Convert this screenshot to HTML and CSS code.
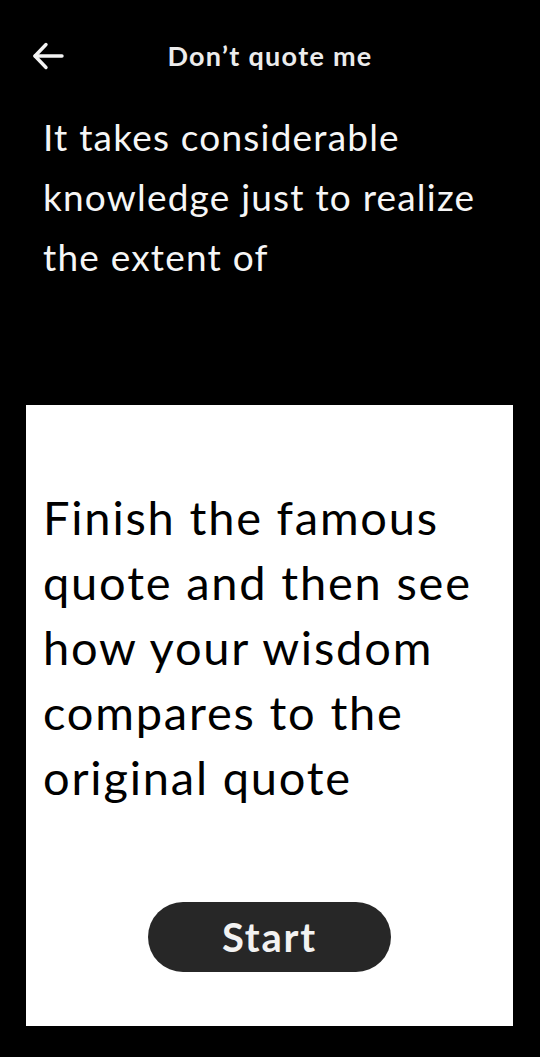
FILE: index.html
```html
<!DOCTYPE html>
<html lang="en">
<head>
<meta charset="utf-8">
<title>Don't quote me</title>
<link rel="stylesheet" href="styles.css">
</head>
<body>
<div class="screen">
  <header class="topbar">
    <button class="back" aria-label="Back">
      <svg width="32" height="28" viewBox="0 0 32 28" fill="none" stroke="currentColor" stroke-width="3.4" stroke-linecap="round" stroke-linejoin="round">
        <path d="M30 14H3"/>
        <path d="M14 2.5L3 14L14 25.5"/>
      </svg>
    </button>
    <h1 class="title">Don’t quote me</h1>
    <span class="spacer"></span>
  </header>
  <p class="quote">It takes considerable knowledge just to realize the extent of</p>
  <section class="card">
    <p class="card-text">Finish the famous quote and then see how your wisdom compares to the original quote</p>
    <div class="actions">
      <button class="start">Start</button>
    </div>
  </section>
</div>
</body>
</html>
```
FILE: styles.css
```css
* { box-sizing: border-box; }
html, body { margin: 0; padding: 0; }
body {
  background: #000;
  color: #f4f4f4;
  font-family: "Lato", "Noto Sans", sans-serif;
  width: 540px;
  height: 1057px;
  overflow: hidden;
}
.screen {
  display: flex;
  flex-direction: column;
  height: 1057px;
}
.topbar {
  display: grid;
  grid-template-columns: 1fr auto 1fr;
  align-items: center;
  padding: 40px 0 35px;
}
.back {
  justify-self: start;
  margin-left: 32px;
  background: none;
  border: 0;
  padding: 0;
  color: #f4f4f4;
  display: flex;
  height: 32px;
  align-items: center;
}
.title {
  margin: 0;
  font-size: 27px;
  line-height: 32px;
  font-weight: 700;
  color: #ececec;
  letter-spacing: 1.3px;
}
.quote {
  margin: 0;
  padding: 0 43px;
  font-size: 37px;
  line-height: 60px;
  font-weight: 400;
  letter-spacing: 1.2px;
  color: #f6f6f6;
}
.card {
  margin: 118px 27px 0 26px;
  height: 621px;
  background: #fff;
  color: #000;
  padding: 80px 17px 54px;
  display: flex;
  flex-direction: column;
}
.card-text {
  margin: 0;
  font-size: 47px;
  line-height: 65px;
  font-weight: 400;
  letter-spacing: 1.8px;
}
.actions {
  margin-top: auto;
  display: flex;
  justify-content: center;
}
.start {
  width: 243px;
  height: 70px;
  border: 0;
  border-radius: 35px;
  background: #272727;
  color: #f2f2f2;
  font-family: inherit;
  font-size: 40px;
  font-weight: 700;
  letter-spacing: 1.8px;
  padding: 0;
}
```
